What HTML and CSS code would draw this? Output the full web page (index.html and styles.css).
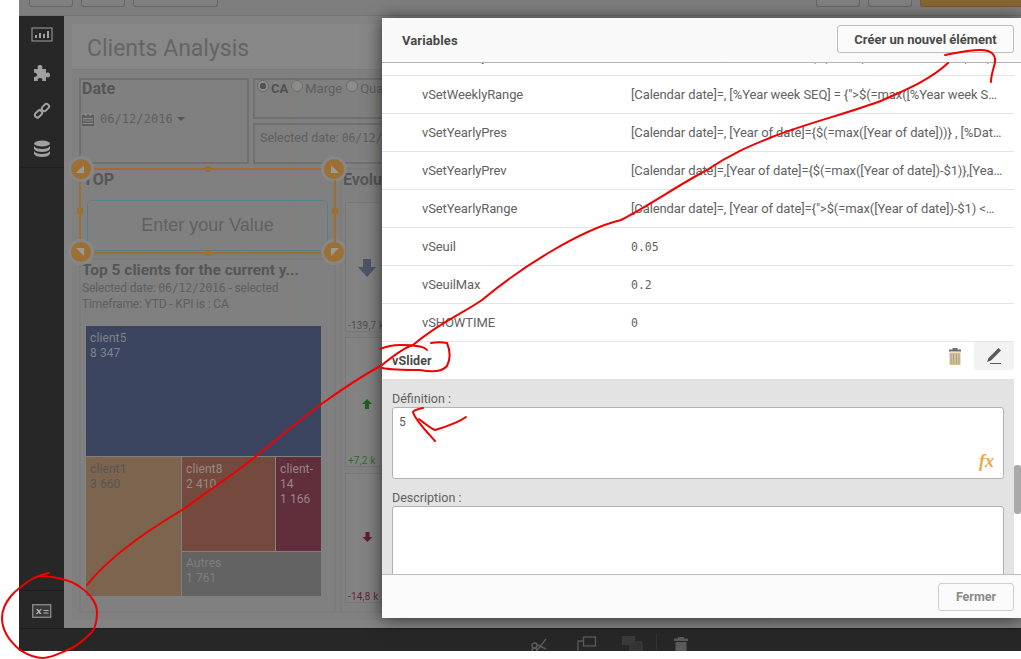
FILE: index.html
```html
<!DOCTYPE html>
<html lang="fr">
<head>
<meta charset="utf-8">
<title>Clients Analysis</title>
<link rel="stylesheet" href="styles.css">
</head>
<body>
<div class="app">
  <header class="toolbar">
    <div class="tool-group">
      <span class="tool tool-a"></span><span class="tool tool-a"></span><span class="tool tool-b"></span>
    </div>
    <div class="tool-group">
      <span class="tool tool-a"></span><span class="tool tool-a"></span><span class="tool tool-orange"></span>
    </div>
  </header>
  <div class="middle">
    <nav class="sidebar">
      <div class="side-top">
        <span class="side-icon"><svg width="22" height="16" viewBox="0 0 22 16"><rect x="1" y="1" width="20" height="13" fill="none" stroke="#8d8d8d" stroke-width="1.2"/><path d="M4 11V8h2v3zM8 11V6h2v5zM12 11V7h2v4zM16 11V4h2v7z" fill="#a0a0a0"/></svg></span>
        <span class="side-icon"><svg width="18" height="18" viewBox="0 0 18 18"><path d="M1 5h4c-1-3 0-4 2-4s3 1 2 4h4v4c3-1 4 0 4 2s-1 3-4 2v4H9c1-2 0-3-2-3s-3 1-2 3H1v-4c2 0 3-1 3-2s-1-3-3-2z" fill="#a0a0a0"/></svg></span>
        <span class="side-icon"><svg width="18" height="18" viewBox="0 0 18 18" fill="none" stroke="#a0a0a0" stroke-width="2"><rect x="1.6" y="9.4" width="8" height="5" rx="2.4" transform="rotate(-45 5.6 12)"/><rect x="8.4" y="3" width="8" height="5" rx="2.4" transform="rotate(-45 12.4 5.5)"/></svg></span>
        <span class="side-icon"><svg width="18" height="18" viewBox="0 0 18 18"><ellipse cx="9" cy="3.5" rx="8" ry="3" fill="#a0a0a0"/><path d="M1 6c1 2 4 3 8 3s7-1 8-3v3c-1 2-4 3-8 3s-7-1-8-3zM1 11c1 2 4 3 8 3s7-1 8-3v3c-1 2-4 3-8 3s-7-1-8-3z" fill="#a0a0a0"/></svg></span>
      </div>
      <div class="side-bottom">
        <svg width="20" height="15" viewBox="0 0 20 15"><rect x="0.7" y="0.7" width="18" height="12.6" fill="#3a3a3a" stroke="#8d8d8d" stroke-width="1.3"/><path d="M4 5h2l1 1.500L8.500 5H10L7.800 7.500 9.500 10H7.600L6.700 8.500 5.400 10H3.800L6 7.500z" fill="#b5b5b5"/><path d="M11.500 6h5v1h-5zM11.500 8.500h5v1h-5z" fill="#b5b5b5"/></svg>
      </div>
    </nav>
    <main class="canvas">
      <section class="sheet">
        <h1 class="sheet-title">Clients Analysis</h1>
        <div class="sheet-grid">
          <div class="panel date-panel">
            <div class="panel-title">Date</div>
            <div class="date-value">
              <svg width="12" height="13" viewBox="0 0 12 13"><path d="M0 2h12v11H0z" fill="#5e5e5e"/><path d="M1 5h10v1.200H1zM1 7.500h10v1H1zM1 10h10v1H1zM3 0h1.500v3H3zM7.500 0H9v3H7.500z" fill="#8a8a8a"/></svg>
              <span class="mono">06/12/2016</span><span class="caret"></span>
            </div>
          </div>
          <div class="stack">
            <div class="panel kpi-radio">
              <span class="radio on"></span><b>CA</b>
              <span class="radio"></span><span class="radio-text">Marge</span>
              <span class="radio"></span><span>Quantité</span>
            </div>
            <div class="panel kpi-date">Selected date: <span class="mono-sm">06/12/2016</span></div>
          </div>
          <div class="col-left">
            <div class="panel top-object">
              <div class="panel-title">TOP</div>
              <div class="value-input">Enter your Value</div>
              <div class="selection">
                <span class="handle h-tl"></span><span class="handle h-tr"></span><span class="handle h-bl"></span><span class="handle h-br"></span>
                <span class="grip g-t"></span><span class="grip g-b"></span><span class="grip g-l"></span><span class="grip g-r"></span>
              </div>
            </div>
            <div class="panel chart-panel">
              <div class="chart-title">Top 5 clients for the current y...</div>
              <div class="chart-sub">Selected date: <span class="mono-sm">06/12/2016</span> - selected</div>
              <div class="chart-sub">Timeframe: YTD - KPI is : CA</div>
              <div class="treemap">
                <div class="tile t-blue">client5<br>8 347</div>
                <div class="tile t-tan">client1<br>3 660</div>
                <div class="tile t-rust">client8<br>2 410</div>
                <div class="tile t-wine">client-<br>14<br>1 166</div>
                <div class="tile t-gray">Autres<br>1 761</div>
              </div>
            </div>
          </div>
          <div class="panel evo-panel">
            <div class="panel-title">Evolution</div>
            <div class="evo-card evo-1">
              <svg class="arrow" width="18" height="18" viewBox="0 0 18 18"><path d="M5 0h8v8h5L9 18 0 8h5z" fill="#4a5767"/></svg>
              <span class="evo-label">-139,7 k</span>
            </div>
            <div class="evo-card evo-2">
              <svg class="arrow" width="10" height="10" viewBox="0 0 10 10"><path d="M3 10V5H0l5-5 5 5H7v5z" fill="#1f5f20"/></svg>
              <span class="evo-label up">+7,2 k</span>
            </div>
            <div class="evo-card evo-3">
              <svg class="arrow" width="11" height="10" viewBox="0 0 10 10"><path d="M3 0v5H0l5 5 5-5H7V0z" fill="#651c2f"/></svg>
              <span class="evo-label down">-14,8 k</span>
            </div>
          </div>
        </div>
      </section>
    </main>
  </div>
  <footer class="bottombar">
    <svg class="bar-cut" width="18" height="18" viewBox="0 0 18 18" fill="none" stroke="#5a5a5a" stroke-width="1.5"><circle cx="3.500" cy="9.500" r="2.500"/><circle cx="3.500" cy="14.500" r="2.500"/><path d="M5.500 8.500L15 13M5.500 15L15 3"/></svg>
    <svg class="bar-copy" width="20" height="16" viewBox="0 0 20 16" fill="none" stroke="#5a5a5a" stroke-width="1.3"><rect x="6.500" y="1" width="12" height="9"/><path d="M6 5H1v10"/></svg>
    <svg class="bar-paste" width="21" height="16" viewBox="0 0 21 16"><path d="M0 0h13v9H0z" fill="#3a3a3a"/><path d="M8 6h12v9H8z" fill="#333" stroke="#3e3e3e"/></svg>
    <span class="bar-sep"></span>
    <svg class="bar-trash" width="14" height="18" viewBox="0 0 14 18"><path d="M4 1h6v1.500h4V5H0V2.500h4zM1.500 6h11v12h-11z" fill="#5a5a5a"/></svg>
  </footer>
</div>

<aside class="modal">
  <div class="modal-head">
    <span class="modal-title">Variables</span>
    <button class="btn btn-new">Créer un nouvel élément</button>
  </div>
  <div class="modal-body">
    <div class="var-list">
      <div class="var-row clipped"><span class="var-name">vSetWeeklyPrev</span><span class="var-val">[Calendar date]=, [Year of date]={$(=max([%Year week SEQ])-$1)}, [%Date...</span></div>
      <div class="var-row"><span class="var-name">vSetWeeklyRange</span><span class="var-val">[Calendar date]=, [%Year week SEQ] = {"&gt;$(=max([%Year week SEQ])-$1)&lt;=..."}</span></div>
      <div class="var-row"><span class="var-name">vSetYearlyPres</span><span class="var-val">[Calendar date]=, [Year of date]={$(=max([Year of date]))} , [%Date] = {"&lt;=..."}</span></div>
      <div class="var-row"><span class="var-name">vSetYearlyPrev</span><span class="var-val">[Calendar date]=,[Year of date]={$(=max([Year of date])-$1)},[Year of date]</span></div>
      <div class="var-row"><span class="var-name">vSetYearlyRange</span><span class="var-val">[Calendar date]=, [Year of date]={"&gt;$(=max([Year of date])-$1) &lt;Max([Year of date])"}</span></div>
      <div class="var-row"><span class="var-name">vSeuil</span><span class="var-val mono-val">0.05</span></div>
      <div class="var-row"><span class="var-name">vSeuilMax</span><span class="var-val mono-val">0.2</span></div>
      <div class="var-row"><span class="var-name">vSHOWTIME</span><span class="var-val mono-val">0</span></div>
      <div class="var-open-head">
        <span class="var-open-name">vSlider</span>
        <div class="var-actions">
          <svg width="14" height="17" viewBox="0 0 14 17"><path d="M4.500 0h5v1.500H13V3.500H1V1.500h3.500z" fill="#6e6e6e"/><path d="M1.500 4.500h11V17h-11z" fill="#d9bf8f"/><path d="M3 6v10M5.500 6v10M8.500 6v10M11 6v10" stroke="#a5a5a5"/></svg>
          <span class="edit-btn"><svg width="18" height="18" viewBox="0 0 18 18"><path d="M13.500 1l2.500 2.500L6 13.500 2 15l1.500-4z" fill="#595959"/><path d="M5 16.500h11" stroke="#595959" stroke-width="1"/></svg></span>
        </div>
      </div>
      <div class="var-form">
        <label class="form-label">Définition :</label>
        <div class="field field-def"><span>5</span><em class="fx">fx</em></div>
        <label class="form-label">Description :</label>
        <div class="field field-desc"></div>
      </div>
    </div>
    <span class="scroll-thumb"></span>
  </div>
  <div class="modal-foot"><button class="btn btn-close">Fermer</button></div>
</aside>

<svg class="ink" width="1021" height="659" viewBox="0 0 1021 659" fill="none" stroke="#f00000" stroke-width="2" stroke-linecap="round" stroke-linejoin="round">
  <path d="M87 585C105 562 135 538 182 510C210 490 235 473 255 457C280 437 300 420 320 405C345 387 362 376 382 365C398 352 406 347 413 345C440 322 462 314 482 300C520 268 580 230 621 220C650 205 680 184 707 170C730 154 750 146 772 137C810 122 850 113 883 100C905 90 930 80 948 63"/>
  <path d="M40 576C50 576 70 579 80 587C92 595 97 605 97 612C97 622 95 628 92 632C84 640 78 645 72 648C60 653 52 658 43 658C32 658 25 653 20 650C8 640 2 630 2 618C2 608 6 602 11 596C18 588 27 582 34 578C40 575 44 574 49 573"/>
  <path d="M945 55C955 53 968 50 981 50C990 50 996 54 995 62C994 68 991 74 991 82"/>
  <path d="M427 350C424 346 410 345 400 345C392 345 385 347 380 349"/>
  <path d="M382 368C392 370 408 370 420 370C430 372 442 372 447 366C451 358 450 350 447 343C442 342 436 342 431 343"/>
  <path d="M423 408C418 409 414 410 413 412C415 420 428 433 435 441"/>
  <path d="M419 419C424 423 430 428 435 430C445 427 458 423 466 417"/>
</svg>
</body>
</html>
```
FILE: styles.css
```css
* { box-sizing: border-box; }
html, body { margin: 0; padding: 0; height: 100%; overflow: hidden; background: #fff; }
body { font-family: Roboto, "Open Sans", sans-serif; color: #595959; width: 1021px; height: 659px; position: relative; }

.app { margin-left: 19px; width: 1002px; height: 651px; display: flex; flex-direction: column; overflow: hidden; background: #808080; }

.toolbar { height: 16px; flex: none; display: flex; justify-content: space-between; padding-left: 10px; background: #7e7e7e; border-bottom: 1px solid #747474; }
.tool-group { display: flex; gap: 8px; }
.tool { display: block; height: 7px; border: 1px solid #666; border-top: 0; border-radius: 0 0 3px 3px; background: #808080; }
.tool-a { width: 44px; }
.tool-b { width: 85px; }
.tool-orange { width: 101px; background: #8a6433; border-color: #7a5a30; border-right: 0; border-radius: 0 0 0 3px; }

.middle { flex: 1; min-height: 0; display: flex; }
.sidebar { width: 45px; flex: none; background: #272727; display: flex; flex-direction: column; justify-content: space-between; }
.side-top { height: 152px; border-bottom: 1px solid #1f1f1f; display: flex; flex-direction: column; align-items: center; padding-top: 10px; gap: 20px; }
.side-icon { display: flex; align-items: center; height: 18px; line-height: 0; }
.side-bottom { height: 38px; padding-top: 4px; border-top: 1px solid #1d1d1d; display: flex; align-items: center; justify-content: center; }

.canvas { flex: 1; min-width: 0; padding: 8px 0 8px 8px; background: #838383; overflow: hidden; }
.sheet { width: 700px; height: 596px; background: #878787; }
.sheet-title { margin: 0; height: 46px; padding: 12px 0 0 15px; font: 400 23px/26px Roboto, sans-serif; color: #656565; border-bottom: 1px solid #7c7c7c; }
.sheet-grid {
  display: grid; grid-template-columns: 170px 83px 360px; grid-template-rows: 86px 1fr; gap: 4px;
  padding: 8px 0 7px 7px; height: 550px;
  background-color: #808080;
  background-image:
    repeating-linear-gradient(90deg, rgba(170,110,40,.08) 0 1px, transparent 1px 43.500px),
    repeating-linear-gradient(0deg, rgba(170,110,40,.07) 0 1px, transparent 1px 45px);
}
.col-left { grid-column: 1 / 3; grid-row: 2; min-height: 0; display: flex; flex-direction: column; gap: 2px; }
.panel { border: 2px solid #707070; }
.date-panel { grid-column: 1; grid-row: 1; padding: 0 1px; }
.panel-title { font: 700 16px/18px Roboto, sans-serif; color: #565656; }
.date-value { display: flex; align-items: center; gap: 6px; margin-top: 14px; font-size: 12px; color: #5e5e5e; }
.mono { font: 12px "DejaVu Sans Mono", monospace; letter-spacing: .05px; }
.mono-sm { font: 11.500px "DejaVu Sans Mono", monospace; letter-spacing: -.2px; }
.caret { width: 0; height: 0; border: 4px solid transparent; border-top-color: #555; border-bottom: 0; margin-left: -2px; }

.top-object { position: relative; height: 88px; padding: 0 6px; border-color: #7c7c7c; }
.top-object .panel-title { margin-left: -4px; height: 26px; padding-top: 1px; }
.value-input { height: 51px; margin-top: 4px; border: 1px solid #53808c; border-radius: 5px 5px 0 0; font: 18px/49px "Liberation Sans", sans-serif; color: #616161; text-align: center; }
.selection { position: absolute; left: -2px; top: -2px; width: 257px; height: 86px; border-top: 2px solid #9c6f33; border-bottom: 2px solid #9c6f33; }
.selection::before, .selection::after { content: ""; position: absolute; top: 10px; bottom: 10px; width: 2px; background: #9c6f33; }
.selection::before { left: 0; }
.selection::after { right: 0; }
.handle { position: absolute; width: 20px; height: 20px; border-radius: 50%; background: #9c6f33; box-shadow: 0 0 0 3px #878787; }
.handle::after { content: ""; position: absolute; width: 0; height: 0; border-style: solid; border-color: transparent; }
.h-tl { left: -8px; top: -11px; }
.h-tr { right: -8px; top: -11px; }
.h-bl { left: -8px; bottom: -10px; }
.h-br { right: -8px; bottom: -10px; }
.h-tl::after { border-width: 0 0 8px 8px; border-bottom-color: #9a9a9a; left: 5px; top: 6px; }
.h-tr::after { border-width: 0 8px 8px 0; border-bottom-color: #9a9a9a; left: 7px; top: 6px; }
.h-bl::after { border-width: 8px 0 0 8px; border-top-color: #9a9a9a; left: 5px; top: 6px; }
.h-br::after { border-width: 8px 8px 0 0; border-top-color: #9a9a9a; left: 7px; top: 6px; }
.grip { position: absolute; width: 6px; height: 6px; background: #9c6f33; }
.g-t { left: 126px; top: -4px; }
.g-b { left: 126px; bottom: -4px; }
.g-l { left: -2px; top: 38px; }
.g-r { right: -2px; top: 38px; }

.chart-panel { flex: 1; min-height: 0; padding: 1px 1px 0; border-color: #7c7c7c; }
.chart-title { font: 700 15.500px/19px Roboto, sans-serif; color: #565656; white-space: nowrap; }
.chart-sub { font-size: 12px; line-height: 16px; letter-spacing: -.15px; color: #5e5e5e; white-space: nowrap; }
.treemap {
  display: grid; margin: 14px 0 0 4px; width: 235px; height: 271px; gap: 1px;
  grid-template-columns: 95px 93px 45px;
  grid-template-rows: 130px 94px 44px;
  font-size: 12px; line-height: 15px; letter-spacing: .1px;
}
.tile { padding: 5px 4px 0; overflow: hidden; }
.t-blue { grid-column: 1 / 4; background: #3c4560; color: #7e828b; }
.t-tan { grid-column: 1; grid-row: 2 / 4; background: #7c644e; color: #555; }
.t-rust { grid-column: 2; grid-row: 2; background: #744a3f; color: #948a83; }
.t-wine { grid-column: 3; grid-row: 2; background: #612f3b; color: #98858b; }
.t-gray { grid-column: 2 / 4; grid-row: 3; background: #636363; color: #7e7e7e; padding-top: 4px; }

.stack { grid-column: 2 / 4; grid-row: 1; display: flex; flex-direction: column; gap: 4px; }
.kpi-radio { height: 41px; padding: 0 2px; display: flex; align-items: flex-start; gap: 2px; font-size: 13px; line-height: 18px; color: #5e5e5e; white-space: nowrap; }
.kpi-radio b { color: #505050; margin-right: 1px; }
.radio-text { margin-right: 2px; }
.radio { width: 12px; height: 12px; margin-top: 0; border: 1px solid #6c6c6c; border-radius: 50%; background: #8c8c8c; }
.radio.on { background: radial-gradient(circle, #555 0 3px, #8c8c8c 3.500px); }
.kpi-date { height: 41px; padding: 5px 5px 0; font-size: 12.500px; color: #5e5e5e; white-space: nowrap; }
.evo-panel { grid-column: 3; grid-row: 2; min-height: 0; padding: 0 3px; border-color: #7c7c7c; }
.evo-panel .panel-title { height: 32px; margin-left: -2px; padding-top: 1px; }
.evo-card { display: flex; flex-direction: column; justify-content: center; align-items: flex-start; position: relative; border: 1px solid #777; background: #828282; width: 110px; height: 130px; }
.evo-2 { margin-top: 5px; }
.evo-3 { margin-top: 6px; }
.evo-1 .arrow { margin-left: 12px; margin-top: 1px; }
.evo-2 .arrow { margin-left: 16px; margin-top: 4px; }
.evo-3 .arrow { margin-left: 16px; margin-top: -2px; }
.evo-label { position: absolute; left: 2px; bottom: -1px; font: 10px/12px Roboto, sans-serif; color: #4f4f4f; letter-spacing: .2px; }
.evo-label.up { color: #2c6b2c; }
.evo-label.down { color: #6a2236; }

.bottombar { height: 23px; flex: none; background: #272727; border-top: 1px solid #1d1d1d; display: flex; align-items: flex-start; padding: 7px 0 0 512px; overflow: hidden; }
.bar-cut, .bar-copy, .bar-paste, .bar-trash { flex: none; }
.bar-copy { margin-left: 28px; }
.bar-paste { margin-left: 24.500px; }
.bar-sep { width: 1px; height: 18px; background: #333; margin: -2px 0 0 13.500px; }
.bar-trash { margin-left: 17px; }

.modal { position: absolute; left: 382px; top: 18px; width: 639px; height: 600px; background: #fff; box-shadow: 0 1px 16px rgba(0,0,0,.65); display: flex; flex-direction: column; }
.modal-head { height: 45px; flex: none; display: flex; align-items: center; justify-content: space-between; padding: 0 7px 2px 20px; background: #f9f9f9; border-bottom: 1px solid #b4b4b4; }
.modal-title { font-weight: 700; font-size: 13px; letter-spacing: .1px; color: #484848; padding-top: 2px; }
.btn { font-family: Roboto, sans-serif; font-weight: 700; border-radius: 3px; background: #fbfbfb; }
.btn-new { width: 177px; height: 28px; border: 1px solid #bdbdbd; color: #4a4a4a; padding: 0; font-size: 13px; }
.modal-body { flex: 1; min-height: 0; position: relative; overflow: hidden; }
.var-list { width: 632px; }
.var-row { height: 38px; display: flex; align-items: center; font-size: 13px; color: #626262; border-bottom: 1px solid #e4e4e4; padding-left: 40px; padding-right: 10px; }
.var-row.clipped { margin-top: -25px; }
.var-name { width: 209px; flex: none; letter-spacing: -.1px; }
.var-val { flex: 1; min-width: 0; white-space: nowrap; overflow: hidden; text-overflow: ellipsis; letter-spacing: -.1px; }
.mono-val { font: 11.500px "DejaVu Sans Mono", monospace; letter-spacing: 0; }
.var-open-head { height: 37px; display: flex; align-items: flex-start; justify-content: space-between; padding-left: 10px; }
.var-open-name { font-weight: 700; font-size: 12.500px; color: #4a4a4a; margin-top: 11px; letter-spacing: .1px; }
.var-actions { display: flex; gap: 12px; align-items: center; }
.edit-btn { display: flex; align-items: center; justify-content: center; width: 40px; height: 28px; background: #f2f2f2; border-radius: 2px; }
.var-form { background: #e3e3e3; padding: 12px 10px 0; }
.form-label { display: block; font-size: 12.500px; line-height: 16px; color: #5f5f5f; }
.field { width: 612px; background: #fff; border: 1px solid #b2b2b2; border-radius: 3px; position: relative; }
.field-def { height: 72px; margin: 0 0 11px; padding: 7px 6px; font-size: 12px; color: #5a5a5a; }
.field-desc { height: 90px; margin-top: 0; }
.fx { position: absolute; right: 9px; bottom: 8px; font: italic 700 18px/18px "Liberation Serif", serif; color: #f0a64a; }
.scroll-thumb { position: absolute; right: 0; top: 402px; width: 7px; height: 49px; background: #a9a9a9; border-radius: 3px; }
.modal-foot { height: 44px; flex: none; display: flex; align-items: center; justify-content: flex-end; padding: 0 7px; background: #fafafa; border-top: 1px solid #bcbcbc; }
.btn-close { width: 76px; height: 28px; border: 1px solid #cfcfcf; color: #8a8a8a; padding: 0; font-size: 12.500px; }

.ink { position: absolute; left: 0; top: 0; pointer-events: none; }
```
